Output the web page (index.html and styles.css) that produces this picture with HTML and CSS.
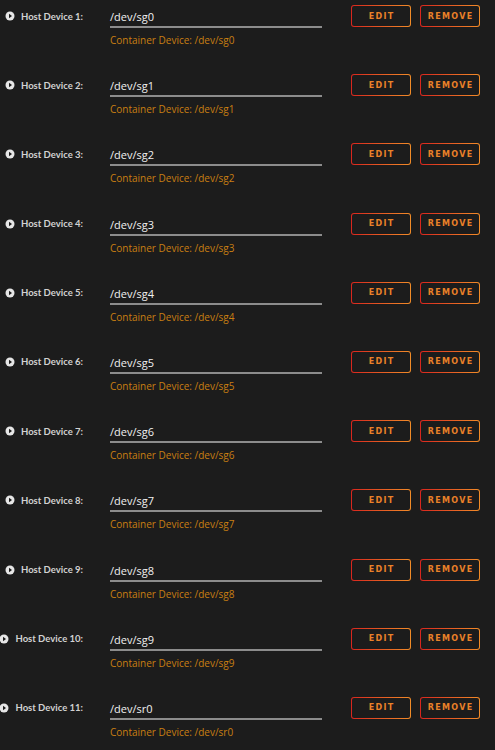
FILE: index.html
```html
<!DOCTYPE html>
<html lang="en">
<head>
  <meta charset="UTF-8" />
  <title>Device Mappings</title>
  <link rel="stylesheet" href="styles.css">
</head>
<body>
  <div class="list">
    <div class="row">
      <div class="label"><svg class="dot" viewBox="0 0 10 10"><circle cx="5" cy="5" r="4.5"/><path d="M4 2.8 L7 5 L4 7.2 Z"/></svg>Host Device 1:</div>
      <div class="field"><div class="value">/dev/sg0</div><div class="target">Container Device: /dev/sg0</div></div>
      <div class="actions"><button>EDIT</button><button>REMOVE</button></div>
    </div>
    <div class="row">
      <div class="label"><svg class="dot" viewBox="0 0 10 10"><circle cx="5" cy="5" r="4.5"/><path d="M4 2.8 L7 5 L4 7.2 Z"/></svg>Host Device 2:</div>
      <div class="field"><div class="value">/dev/sg1</div><div class="target">Container Device: /dev/sg1</div></div>
      <div class="actions"><button>EDIT</button><button>REMOVE</button></div>
    </div>
    <div class="row">
      <div class="label"><svg class="dot" viewBox="0 0 10 10"><circle cx="5" cy="5" r="4.5"/><path d="M4 2.8 L7 5 L4 7.2 Z"/></svg>Host Device 3:</div>
      <div class="field"><div class="value">/dev/sg2</div><div class="target">Container Device: /dev/sg2</div></div>
      <div class="actions"><button>EDIT</button><button>REMOVE</button></div>
    </div>
    <div class="row">
      <div class="label"><svg class="dot" viewBox="0 0 10 10"><circle cx="5" cy="5" r="4.5"/><path d="M4 2.8 L7 5 L4 7.2 Z"/></svg>Host Device 4:</div>
      <div class="field"><div class="value">/dev/sg3</div><div class="target">Container Device: /dev/sg3</div></div>
      <div class="actions"><button>EDIT</button><button>REMOVE</button></div>
    </div>
    <div class="row">
      <div class="label"><svg class="dot" viewBox="0 0 10 10"><circle cx="5" cy="5" r="4.5"/><path d="M4 2.8 L7 5 L4 7.2 Z"/></svg>Host Device 5:</div>
      <div class="field"><div class="value">/dev/sg4</div><div class="target">Container Device: /dev/sg4</div></div>
      <div class="actions"><button>EDIT</button><button>REMOVE</button></div>
    </div>
    <div class="row">
      <div class="label"><svg class="dot" viewBox="0 0 10 10"><circle cx="5" cy="5" r="4.5"/><path d="M4 2.8 L7 5 L4 7.2 Z"/></svg>Host Device 6:</div>
      <div class="field"><div class="value">/dev/sg5</div><div class="target">Container Device: /dev/sg5</div></div>
      <div class="actions"><button>EDIT</button><button>REMOVE</button></div>
    </div>
    <div class="row">
      <div class="label"><svg class="dot" viewBox="0 0 10 10"><circle cx="5" cy="5" r="4.5"/><path d="M4 2.8 L7 5 L4 7.2 Z"/></svg>Host Device 7:</div>
      <div class="field"><div class="value">/dev/sg6</div><div class="target">Container Device: /dev/sg6</div></div>
      <div class="actions"><button>EDIT</button><button>REMOVE</button></div>
    </div>
    <div class="row">
      <div class="label"><svg class="dot" viewBox="0 0 10 10"><circle cx="5" cy="5" r="4.5"/><path d="M4 2.8 L7 5 L4 7.2 Z"/></svg>Host Device 8:</div>
      <div class="field"><div class="value">/dev/sg7</div><div class="target">Container Device: /dev/sg7</div></div>
      <div class="actions"><button>EDIT</button><button>REMOVE</button></div>
    </div>
    <div class="row">
      <div class="label"><svg class="dot" viewBox="0 0 10 10"><circle cx="5" cy="5" r="4.5"/><path d="M4 2.8 L7 5 L4 7.2 Z"/></svg>Host Device 9:</div>
      <div class="field"><div class="value">/dev/sg8</div><div class="target">Container Device: /dev/sg8</div></div>
      <div class="actions"><button>EDIT</button><button>REMOVE</button></div>
    </div>
    <div class="row">
      <div class="label"><svg class="dot" viewBox="0 0 10 10"><circle cx="5" cy="5" r="4.5"/><path d="M4 2.8 L7 5 L4 7.2 Z"/></svg>Host Device 10:</div>
      <div class="field"><div class="value">/dev/sg9</div><div class="target">Container Device: /dev/sg9</div></div>
      <div class="actions"><button>EDIT</button><button>REMOVE</button></div>
    </div>
    <div class="row">
      <div class="label"><svg class="dot" viewBox="0 0 10 10"><circle cx="5" cy="5" r="4.5"/><path d="M4 2.8 L7 5 L4 7.2 Z"/></svg>Host Device 11:</div>
      <div class="field"><div class="value">/dev/sr0</div><div class="target">Container Device: /dev/sr0</div></div>
      <div class="actions"><button>EDIT</button><button>REMOVE</button></div>
    </div>
  </div>
</body>
</html>
```

FILE: styles.css
```css
body {
  margin: 0;
  background: #1c1c1c;
  font-family: 'Open Sans', sans-serif;
  color: #f0f0f0;
}
.list {
  padding-top: 5px;
}
.row {
  display: flex;
  align-items: flex-start;
  height: 69.2px;
}
.label {
  width: 83px;
  height: 22px;
  display: flex;
  align-items: center;
  justify-content: flex-end;
  gap: 6px;
  font-family: 'Lato', sans-serif;
  font-size: 9.5px;
  font-weight: bold;
  color: #d2d2d2;
  white-space: nowrap;
}
.dot {
  width: 10px;
  height: 10px;
  flex-shrink: 0;
}
.dot circle {
  fill: #e6e6e6;
}
.dot path {
  fill: #1c1c1c;
}
.field {
  margin-left: 27px;
  width: 212px;
}
.value {
  font-size: 11px;
  line-height: 14px;
  padding: 5px 0 2px;
  border-bottom: 2px solid #8c8c8c;
}
.target {
  margin-top: 5px;
  font-size: 10px;
  line-height: 14px;
  color: #c97f12;
}
.actions {
  margin-left: 29px;
  display: flex;
  gap: 9px;
}
button {
  width: 60px;
  height: 22px;
  padding: 0;
  border: 1.5px solid transparent;
  border-radius: 3px;
  background: linear-gradient(#1c1c1c, #1c1c1c) padding-box, linear-gradient(90deg, #d8261e, #f28c28) border-box;
  color: #ea8129;
  font-family: 'DejaVu Sans', sans-serif;
  font-size: 8px;
  font-weight: bold;
  letter-spacing: 1.3px;
  text-indent: 1.3px;
}
```
